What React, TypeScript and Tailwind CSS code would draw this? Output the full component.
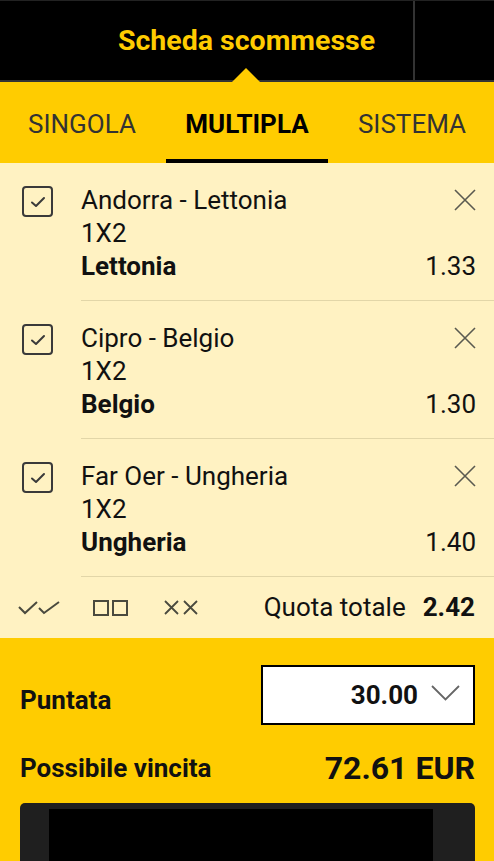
import React from 'react';

const BETS = [
  { match: 'Andorra - Lettonia', market: '1X2', pick: 'Lettonia', odds: '1.33' },
  { match: 'Cipro - Belgio', market: '1X2', pick: 'Belgio', odds: '1.30' },
  { match: 'Far Oer - Ungheria', market: '1X2', pick: 'Ungheria', odds: '1.40' },
];

function CheckBox() {
  return (
    <div className="w-[31px] h-[31px] shrink-0 rounded-[4px] border-2 border-[#3a3a3a] flex items-center justify-center">
      <svg width="16" height="12" viewBox="0 0 16 12" fill="none">
        <path d="M2 6.5 L6 10 L14 2" stroke="#3a3a3a" strokeWidth="2" strokeLinecap="round" strokeLinejoin="round" />
      </svg>
    </div>
  );
}

function CloseIcon() {
  return (
    <svg width="22" height="22" viewBox="0 0 22 22" fill="none">
      <path d="M1 1 L21 21 M21 1 L1 21" stroke="#5a5a50" strokeWidth="1.6" />
    </svg>
  );
}

export default function App() {
  return (
    <div className="w-[494px] h-[861px] overflow-hidden bg-[#ffcc00] font-['Roboto',sans-serif] text-[#111]">
      {/* Header */}
      <div className="relative h-[82px] bg-black border-t border-[#222] border-b-2 border-b-[#333] flex">
        <div className="flex-1 flex items-center justify-center pl-[80px] pt-[1px]">
          <span className="text-[28.5px] font-bold text-[#ffcc00]">Scheda scommesse</span>
        </div>
        <div className="w-[81px] border-l-2 border-[#333]" />
        <div className="absolute left-[232px] bottom-[-2px] w-0 h-0 border-l-[14px] border-r-[14px] border-b-[14px] border-l-transparent border-r-transparent border-b-[#ffcc00]" />
      </div>

      {/* Tabs */}
      <div className="h-[81px] flex bg-[#ffcc00] text-[26px]">
        <div className="flex-1 h-full flex items-center justify-center pt-[3px] pr-[2px] text-[#333]">SINGOLA</div>
        <div className="w-[162px] h-full flex flex-col">
          <div className="flex-1 flex items-center justify-center pt-[7px] font-bold text-black">MULTIPLA</div>
          <div className="h-[4px] bg-black" />
        </div>
        <div className="flex-1 h-full flex items-center justify-center pt-[3px] pl-[2px] text-[#333]">SISTEMA</div>
      </div>

      {/* Bets list */}
      <div className="bg-[#fff2c2]">
        {BETS.map((b) => (
          <div key={b.match} className="flex pl-[22px]">
            <div className="pt-[23px]">
              <CheckBox />
            </div>
            <div className="flex-1 ml-[28px] pt-[21px] pb-[17px] border-b border-[#e2d6a8] text-[26px] leading-[33px]">
              <div className="flex items-start justify-between pr-[18px]">
                <span>{b.match}</span>
                <span className="mt-[5px]"><CloseIcon /></span>
              </div>
              <div>{b.market}</div>
              <div className="flex justify-between pr-[18px]">
                <span className="font-bold">{b.pick}</span>
                <span>{b.odds}</span>
              </div>
            </div>
          </div>
        ))}

        {/* Footer row */}
        <div className="h-[61px] flex items-center pl-[18px] pr-[19px]">
          <svg width="42" height="15" viewBox="0 0 42 15" fill="none">
            <path d="M1 7 L7 13 L19 2 M21 8 L26 13 L41 2" stroke="#4a4a3e" strokeWidth="2" />
          </svg>
          <svg width="35" height="16" viewBox="0 0 35 16" fill="none" className="ml-[33px]">
            <rect x="1" y="1" width="14" height="14" stroke="#4a4a3e" strokeWidth="2" />
            <rect x="20" y="1" width="14" height="14" stroke="#4a4a3e" strokeWidth="2" />
          </svg>
          <svg width="34" height="15" viewBox="0 0 34 15" fill="none" className="ml-[36px]">
            <path d="M1 1 L14 14 M14 1 L1 14 M20 1 L33 14 M33 1 L20 14" stroke="#4a4a3e" strokeWidth="1.8" />
          </svg>
          <div className="flex-1 text-right text-[26px]">
            <span>Quota totale</span>
            <span className="font-bold ml-[17px]">2.42</span>
          </div>
        </div>
      </div>

      {/* Stake */}
      <div className="pl-[20px] pr-[19px] pt-[27px]">
        <div className="flex items-center justify-between">
          <span className="text-[26px] font-bold mt-[10px]">Puntata</span>
          <div className="w-[214px] h-[60px] bg-white border-2 border-black flex items-center justify-end pr-[13px]">
            <span className="text-[26px] font-bold mr-[13px]">30.00</span>
            <svg width="29" height="16" viewBox="0 0 29 16" fill="none" className="mb-[4px]">
              <path d="M1 1 L14.5 14.5 L28 1" stroke="#666" strokeWidth="1.8" />
            </svg>
          </div>
        </div>
        <div className="flex items-center justify-between mt-[19px]">
          <span className="text-[26px] font-bold">Possibile vincita</span>
          <span className="text-[32px] font-bold">72.61 EUR</span>
        </div>
        <div className="mt-[11px] h-[80px] rounded-t-[5px] bg-[#1f1f1f] pl-[29px] pr-[42px] pt-[6px]">
          <div className="h-full bg-black" />
        </div>
      </div>
    </div>
  );
}
